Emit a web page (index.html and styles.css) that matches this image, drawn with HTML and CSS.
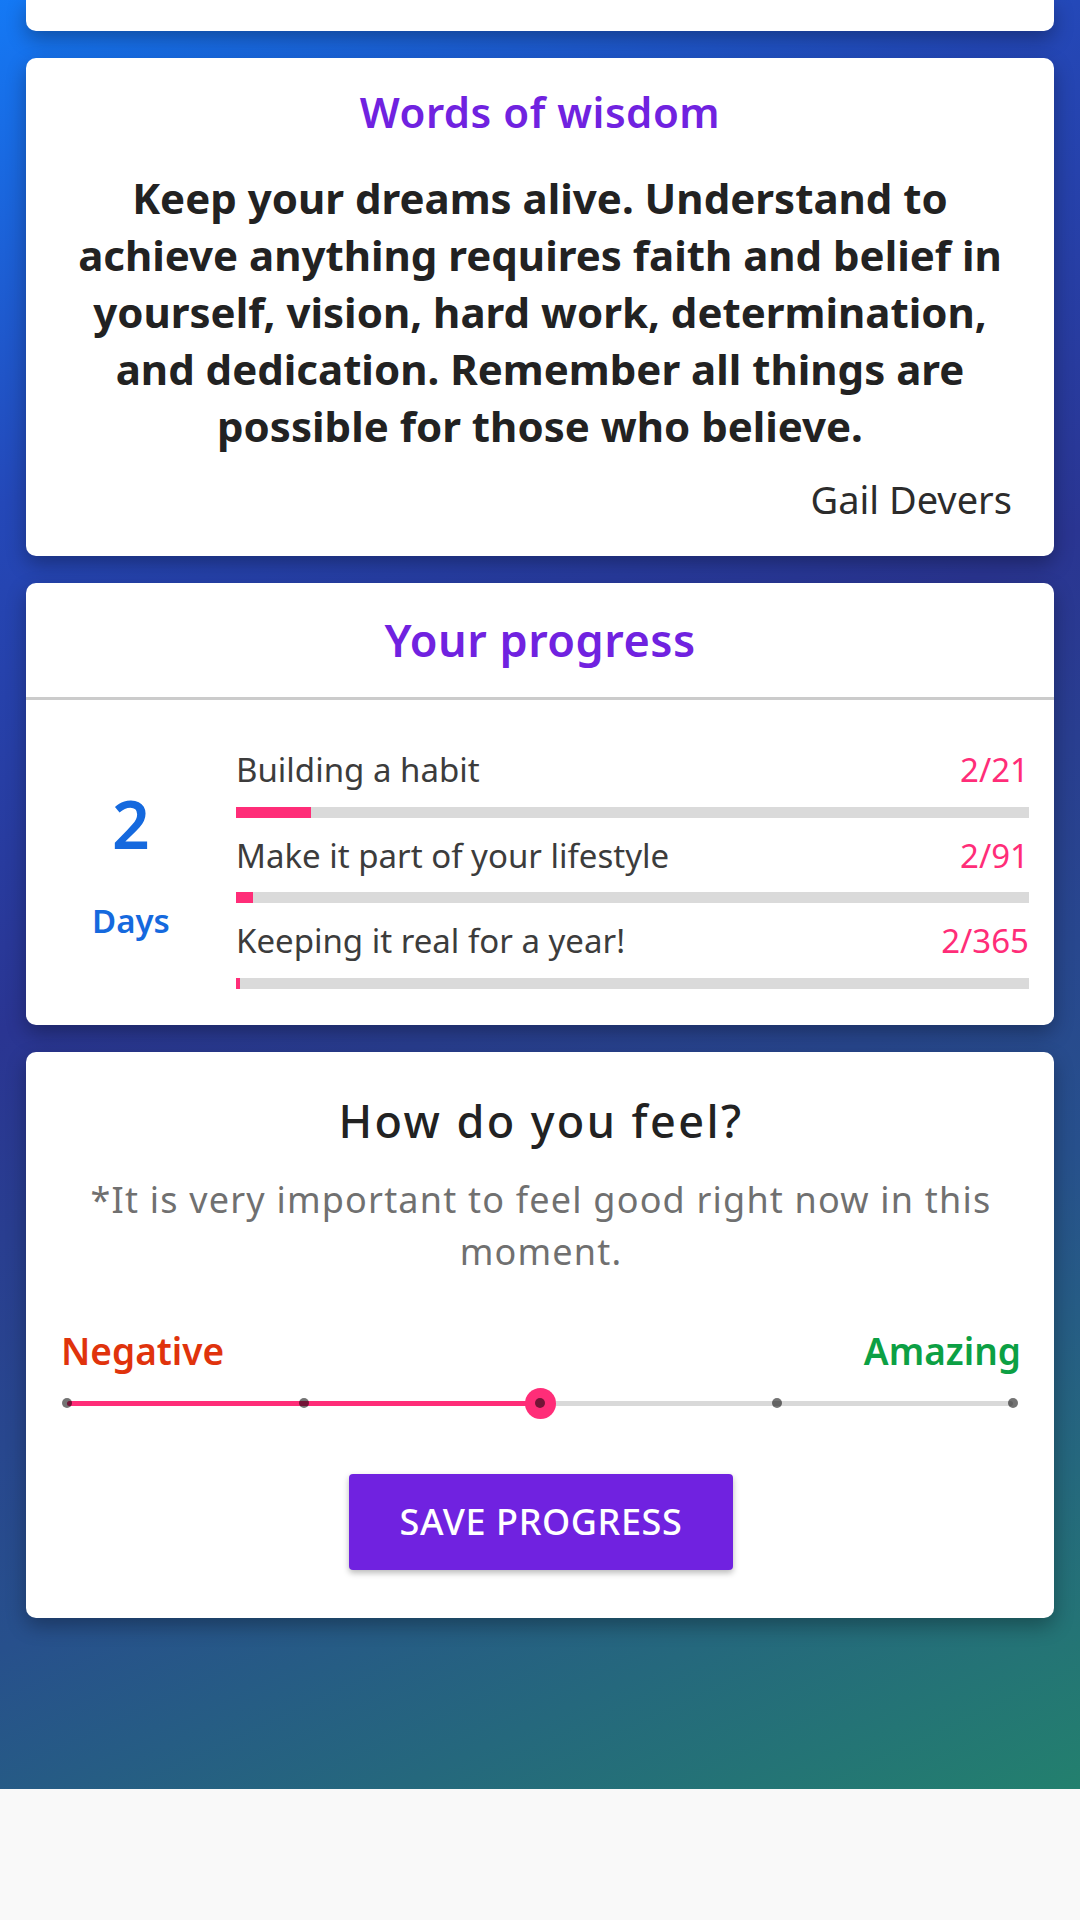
FILE: index.html
```html
<!DOCTYPE html>
<html lang="en">
<head>
<meta charset="utf-8">
<title>Progress</title>
<link rel="stylesheet" href="styles.css">
</head>
<body>
<div class="screen">
  <div class="card card-cut"></div>

  <section class="card wisdom">
    <h2 class="card-title">Words of wisdom</h2>
    <p class="quote">Keep your dreams alive. Understand to achieve anything requires faith and belief in yourself, vision, hard work, determination, and dedication. Remember all things are possible for those who believe.</p>
    <p class="author">Gail Devers</p>
  </section>

  <section class="card progress">
    <div class="progress-head"><h2 class="card-title progress-title">Your progress</h2></div>
    <div class="progress-body">
      <div class="streak">
        <div class="streak-num">2</div>
        <div class="streak-label">Days</div>
      </div>
      <div class="goals">
        <div class="goal">
          <div class="goal-row"><span class="goal-name">Building a habit</span><span class="goal-val">2/21</span></div>
          <div class="bar"><div class="bar-fill" style="width:9.52%"></div></div>
        </div>
        <div class="goal">
          <div class="goal-row"><span class="goal-name">Make it part of your lifestyle</span><span class="goal-val">2/91</span></div>
          <div class="bar"><div class="bar-fill" style="width:2.2%"></div></div>
        </div>
        <div class="goal">
          <div class="goal-row"><span class="goal-name">Keeping it real for a year!</span><span class="goal-val">2/365</span></div>
          <div class="bar"><div class="bar-fill" style="width:0.55%"></div></div>
        </div>
      </div>
    </div>
  </section>

  <section class="card feel">
    <h2 class="feel-title">How do you feel?</h2>
    <p class="feel-sub">*It is very important to feel good right now in this moment.</p>
    <div class="scale-labels">
      <span class="neg">Negative</span>
      <span class="pos">Amazing</span>
    </div>
    <div class="slider">
      <div class="track"><div class="track-fill" style="width:50%"></div></div>
      <div class="thumb" style="left:50%"></div>
      <span class="tick" style="left:0%"></span>
      <span class="tick" style="left:25%"></span>
      <span class="tick" style="left:50%"></span>
      <span class="tick" style="left:75%"></span>
      <span class="tick" style="left:100%"></span>
    </div>
    <button class="save-btn" type="button">SAVE PROGRESS</button>
  </section>
</div>
</body>
</html>
```
FILE: styles.css
```css
html, body {
  margin: 0;
  padding: 0;
}
body {
  background: #f9f9f9;
  font-family: "Noto Sans", "Open Sans", "DejaVu Sans", sans-serif;
  width: 1080px;
  height: 1920px;
  overflow: hidden;
}
.screen {
  box-sizing: border-box;
  height: 1789px;
  padding: 0 26px;
  display: flex;
  flex-direction: column;
  gap: 27px;
  background: linear-gradient(155deg, #1479f5 0%, #2448b8 22%, #2a3592 45%, #27508c 72%, #23806e 100%);
}
.card {
  background: #fff;
  border-radius: 10px;
  box-shadow: 0 8px 20px rgba(0, 0, 0, 0.3);
}
.card-cut {
  height: 31px;
  flex: none;
  border-radius: 0 0 10px 10px;
}

/* Words of wisdom */
.wisdom {
  padding: 27px 42px 32px;
}
.card-title {
  margin: 0;
  text-align: center;
  color: #7022e0;
  font-size: 42px;
  font-weight: 600;
  line-height: 54.5px;
  letter-spacing: 0.5px;
}
.quote {
  margin: 29px 0 0;
  text-align: center;
  color: #222;
  font-size: 42px;
  font-weight: 700;
  line-height: 57px;
}
.author {
  margin: 21px 0 0;
  text-align: right;
  color: #2c2c2c;
  font-size: 38px;
  line-height: 49px;
}

/* Progress */
.progress-head {
  padding: 28px 0;
  border-bottom: 3px solid #cbcbcb;
}
.progress-title {
  font-size: 45px;
  line-height: 58.6px;
  letter-spacing: 0.5px;
}
.progress-body {
  display: flex;
  align-items: center;
  padding: 48px 25px 36px 0;
}
.streak {
  width: 210px;
  flex: none;
  text-align: center;
  color: #1569de;
  font-weight: 600;
  padding-bottom: 9px;
}
.streak-num {
  font-size: 66px;
  line-height: 1;
}
.streak-label {
  margin-top: 48px;
  font-size: 33px;
  line-height: 1;
}
.goals {
  flex: 1;
  display: flex;
  flex-direction: column;
  gap: 16px;
}
.goal-row {
  display: flex;
  justify-content: space-between;
  font-size: 33px;
  line-height: 43.6px;
}
.goal-name {
  color: #3c3c3c;
}
.goal-val {
  color: #ff2d78;
}
.bar {
  margin-top: 15px;
  height: 11px;
  background: #dadada;
}
.bar-fill {
  height: 100%;
  background: #ff2d78;
}

/* How do you feel */
.feel {
  padding: 38px 33px 48px 35px;
  display: flex;
  flex-direction: column;
}
.feel-title {
  margin: 0;
  text-align: center;
  color: #222;
  font-size: 45px;
  font-weight: 500;
  line-height: 61px;
  letter-spacing: 2.4px;
}
.feel-sub {
  margin: 23px 0 0;
  text-align: center;
  color: #707070;
  font-size: 36px;
  line-height: 52px;
  letter-spacing: 1.2px;
}
.scale-labels {
  margin-top: 48px;
  display: flex;
  justify-content: space-between;
  font-size: 37px;
  font-weight: 600;
  line-height: 49px;
}
.neg {
  color: #e0330c;
}
.pos {
  color: #0ca044;
}
.slider {
  position: relative;
  height: 32px;
  margin: 12px 8px 0 6px;
}
.track {
  position: absolute;
  left: 0;
  right: 0;
  top: 14px;
  height: 5px;
  background: #d9d9d9;
  border-radius: 3px;
}
.track-fill {
  height: 100%;
  background: #ff2d78;
  border-radius: 3px;
}
.thumb {
  position: absolute;
  top: 1px;
  width: 31px;
  height: 31px;
  margin-left: -15.5px;
  border-radius: 50%;
  background: #ff2d78;
}
.tick {
  position: absolute;
  top: 11.5px;
  width: 10px;
  height: 10px;
  margin-left: -5px;
  border-radius: 50%;
  background: rgba(0, 0, 0, 0.55);
}
.save-btn {
  align-self: center;
  margin-top: 55px;
  width: 384px;
  height: 96px;
  border: 0;
  border-radius: 4px;
  background: #7022e0;
  color: #fff;
  font-family: "Noto Sans", "Open Sans", sans-serif;
  font-size: 36px;
  font-weight: 500;
  letter-spacing: 0.6px;
  box-shadow: 0 3px 6px rgba(0, 0, 0, 0.28);
}
```
